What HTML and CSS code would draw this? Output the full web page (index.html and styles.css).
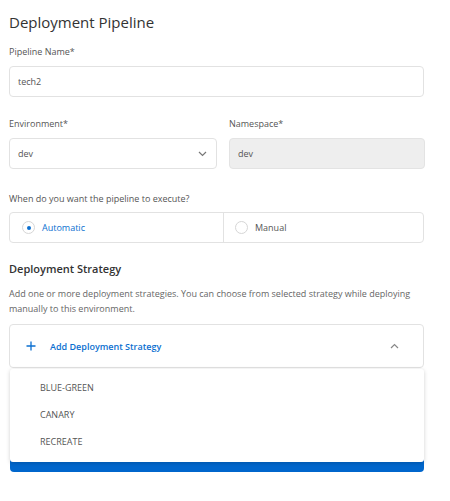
FILE: index.html
```html
<!DOCTYPE html>
<html>
<head>
<meta charset="utf-8">
<link rel="stylesheet" href="styles.css">
</head>
<body>
<div class="page">
  <h1 class="title">Deployment Pipeline</h1>

  <div class="field">
    <div class="label">Pipeline Name*</div>
    <div class="input">tech2</div>
  </div>

  <div class="row">
    <div class="field">
      <div class="label">Environment*</div>
      <div class="input select">
        <span>dev</span>
        <svg class="chev" width="9" height="6" viewBox="0 0 9 6"><path d="M1 1 L4.5 4.5 L8 1" fill="none" stroke="#777" stroke-width="1.2"/></svg>
      </div>
    </div>
    <div class="field">
      <div class="label">Namespace*</div>
      <div class="input disabled">dev</div>
    </div>
  </div>

  <div class="field">
    <div class="label">When do you want the pipeline to execute?</div>
    <div class="radios">
      <div class="radio on"><span class="circle"><span class="dot"></span></span><span>Automatic</span></div>
      <div class="radio"><span class="circle"></span><span>Manual</span></div>
    </div>
  </div>

  <h2 class="heading">Deployment Strategy</h2>
  <p class="desc">Add one or more deployment strategies. You can choose from selected strategy while deploying manually to this environment.</p>

  <div class="strategy">
    <div class="accordion">
      <svg class="plus" width="10" height="10" viewBox="0 0 10 10"><path d="M5 0.5 V9.5 M0.5 5 H9.5" stroke="#0b6fd0" stroke-width="1.3"/></svg>
      <span class="add">Add Deployment Strategy</span>
      <svg class="up" width="9" height="6" viewBox="0 0 9 6"><path d="M1 5 L4.5 1.5 L8 5" fill="none" stroke="#888" stroke-width="1.2"/></svg>
    </div>
    <div class="menu">
      <div class="item">BLUE-GREEN</div>
      <div class="item">CANARY</div>
      <div class="item">RECREATE</div>
    </div>
    <div class="button"></div>
  </div>
</div>
</body>
</html>
```

FILE: styles.css
```css
* { box-sizing: border-box; }
body {
  margin: 0;
  background: #fff;
  font-family: "Open Sans", "Noto Sans", sans-serif;
  color: #444;
}
.page {
  width: 415px;
  margin-left: 9px;
  display: flex;
  flex-direction: column;
}
.title {
  margin: 12px 0 0;
  font-size: 15px;
  line-height: 20px;
  font-weight: 400;
  color: #333;
}
.field {
  display: flex;
  flex-direction: column;
}
.page > .field:first-of-type { margin-top: 13px; }
.label {
  font-size: 9px;
  line-height: 14px;
  color: #555;
  margin-bottom: 7px;
}
.input {
  height: 31px;
  border: 1px solid #e2e2e2;
  border-radius: 4px;
  font-size: 9px;
  color: #555;
  padding: 0 8px;
  display: flex;
  align-items: center;
}
.select { justify-content: space-between; padding-right: 9px; }
.disabled { background: #eeeeee; border-color: #e3e3e3; }
.row {
  display: grid;
  grid-template-columns: 208px 196px;
  column-gap: 12px;
  margin-top: 20px;
}
.row + .field { margin-top: 23px; }
.radios {
  height: 31px;
  border: 1px solid #e2e2e2;
  border-radius: 4px;
  display: grid;
  grid-template-columns: 213px 1fr;
  margin-top: -1px;
}
.radio {
  display: flex;
  align-items: center;
  gap: 7px;
  padding-left: 12px;
  font-size: 9px;
  color: #555;
}
.radio + .radio { border-left: 1px solid #e2e2e2; padding-left: 11px; }
.radio.on { color: #0b6fd0; }
.circle {
  width: 13px;
  height: 13px;
  border: 1px solid #d6d6d6;
  border-radius: 50%;
  display: flex;
  align-items: center;
  justify-content: center;
}
.dot {
  width: 4px;
  height: 4px;
  border-radius: 50%;
  background: #0b6fd0;
}
.heading {
  margin: 18px 0 0;
  font-size: 11px;
  line-height: 16px;
  font-weight: 600;
  color: #333;
}
.desc {
  margin: 9px 0 0;
  font-size: 9px;
  line-height: 15px;
  color: #666;
}
.strategy {
  position: relative;
  margin-top: 8px;
}
.accordion {
  height: 44px;
  border: 1px solid #e2e2e2;
  border-radius: 4px;
  display: flex;
  align-items: center;
  padding: 0 24px 0 16px;
}
.plus { flex: none; }
.add {
  margin-left: 14px;
  font-size: 9px;
  font-weight: 600;
  color: #0b6fd0;
  flex: 1;
}
.menu {
  position: absolute;
  left: 1px;
  right: 0;
  top: 45px;
  height: 93px;
  background: #fff;
  border-radius: 3px;
  box-shadow: 0 1px 4px rgba(0,0,0,0.18);
  padding-top: 5px;
  z-index: 2;
}
.item {
  height: 27px;
  line-height: 27px;
  padding-left: 30px;
  font-size: 9px;
  color: #555;
}
.button {
  margin: 72px 0 0 1px;
  height: 32px;
  background: #0066cc;
  border-radius: 4px;
}
```
